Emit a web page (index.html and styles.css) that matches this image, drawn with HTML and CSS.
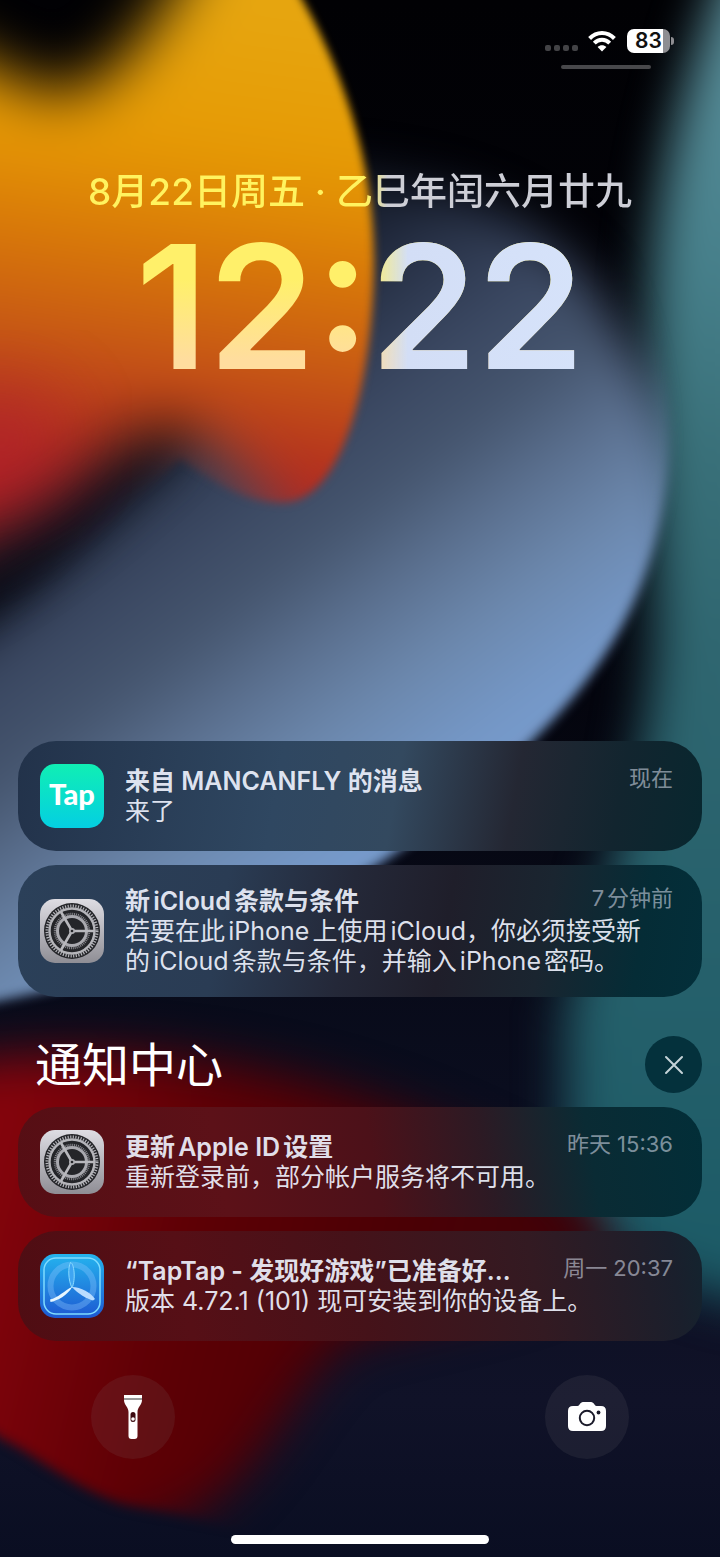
FILE: index.html
```html
<!DOCTYPE html>
<html lang="zh-CN">
<head>
    <meta charset="UTF-8">
    <meta name="viewport" content="width=device-width, initial-scale=1.0">
    <title>锁定屏幕</title>
    <link rel="stylesheet" href="styles.css">
</head>
<body>
    <!-- Wallpaper -->
    <svg class="wallpaper" viewBox="0 0 720 1557" preserveAspectRatio="none" aria-hidden="true" color-interpolation-filters="sRGB">
        <defs>
            <linearGradient id="base" x1="0" y1="0" x2="0" y2="1">
                <stop offset="0" stop-color="#010104"/>
                <stop offset="0.45" stop-color="#04050e"/>
                <stop offset="0.7" stop-color="#0a0d1e"/>
                <stop offset="0.9" stop-color="#101228"/>
                <stop offset="1" stop-color="#0a0e22"/>
            </linearGradient>
            <linearGradient id="teal" gradientUnits="userSpaceOnUse" x1="0" y1="0" x2="0" y2="1300">
                <stop offset="0" stop-color="#5a8f9b"/>
                <stop offset="0.2" stop-color="#47808b"/>
                <stop offset="0.35" stop-color="#397079"/>
                <stop offset="0.5" stop-color="#2f6670"/>
                <stop offset="1" stop-color="#1b5a66"/>
            </linearGradient>
            <linearGradient id="blue" gradientUnits="userSpaceOnUse" x1="240" y1="320" x2="540" y2="720">
                <stop offset="0" stop-color="#1a2132"/>
                <stop offset="0.06" stop-color="#232c40"/>
                <stop offset="0.28" stop-color="#3a4761"/>
                <stop offset="0.45" stop-color="#45556e"/>
                <stop offset="0.6" stop-color="#5a6f8e"/>
                <stop offset="0.77" stop-color="#6c88ad"/>
                <stop offset="0.98" stop-color="#769acb"/>
            </linearGradient>
            <linearGradient id="orange" gradientUnits="userSpaceOnUse" x1="240" y1="0" x2="170" y2="500">
                <stop offset="0" stop-color="#e6a610"/>
                <stop offset="0.3" stop-color="#e69a04"/>
                <stop offset="0.5" stop-color="#d97a08"/>
                <stop offset="0.7" stop-color="#c85a14"/>
                <stop offset="0.88" stop-color="#b5351e"/>
                <stop offset="1" stop-color="#b02222"/>
            </linearGradient>
            <linearGradient id="red" gradientUnits="userSpaceOnUse" x1="0" y1="1150" x2="640" y2="1300">
                <stop offset="0" stop-color="#84040c"/>
                <stop offset="0.3" stop-color="#5e0005"/>
                <stop offset="0.6" stop-color="#4c0005"/>
                <stop offset="1" stop-color="#3c0208"/>
            </linearGradient>
            <filter id="soft6" x="-20%" y="-20%" width="140%" height="140%"><feGaussianBlur stdDeviation="6"/></filter>
            <filter id="soft4" x="-20%" y="-20%" width="140%" height="140%"><feGaussianBlur stdDeviation="4"/></filter>
            <filter id="soft24" x="-30%" y="-30%" width="160%" height="160%"><feGaussianBlur stdDeviation="24"/></filter>
            <filter id="soft30" x="-30%" y="-30%" width="160%" height="160%"><feGaussianBlur stdDeviation="30"/></filter>
            <filter id="soft40" x="-60%" y="-60%" width="220%" height="220%"><feGaussianBlur stdDeviation="40"/></filter>
            <mask id="blueEdge" maskUnits="userSpaceOnUse" x="0" y="0" width="720" height="1557">
                <path filter="url(#soft6)" fill="#fff" d="M-60 100H560C640 190 684 360 668 480C652 600 600 676 528 745C470 795 430 830 376 866C250 940 120 980-60 1012Z"/>
            </mask>
            <mask id="orangeEdge" maskUnits="userSpaceOnUse" x="0" y="0" width="720" height="1557">
                <path filter="url(#soft4)" fill="#fff" d="M-60-60H265C328 30 374 140 374 260C374 370 346 502 282 503C240 503 210 480 180 460L-60 700Z"/>
            </mask>
            <mask id="redEdge" maskUnits="userSpaceOnUse" x="0" y="900" width="720" height="657">
                <path filter="url(#soft6)" fill="#fff" d="M-60 900H780V1557H300C220 1520 170 1514 130 1506C80 1494 30 1450 0 1438L-60 1390Z"/>
            </mask>
        </defs>
        <rect width="720" height="1557" fill="url(#base)"/>
        <path filter="url(#soft24)" fill="url(#teal)" d="M800-60H735C690 60 655 170 650 300C646 420 655 520 655 640C645 780 600 900 566 1010V1200C600 1250 680 1300 800 1310Z"/>
        <g mask="url(#blueEdge)">
            <path filter="url(#soft24)" fill="url(#blue)" d="M-80 660C60 600 100 480 200 420L320 170C440 180 560 210 620 330C720 480 700 640 620 800L560 1060L-80 1100Z"/>
            <path filter="url(#soft24)" fill="#10131f" opacity=".95" d="M-100 480L150 400L180 450C120 500 60 570-100 640Z"/>
        </g>
        <g mask="url(#orangeEdge)">
            <path filter="url(#soft30)" fill="url(#orange)" d="M-100 20C0 70 30 92 60 92C105 92 160 30 225-100H500V600L340 570C260 525 230 430 165 430C110 430 70 510-80 560Z"/>
            <ellipse filter="url(#soft40)" cx="0" cy="440" rx="60" ry="50" fill="#b01c30" opacity=".6"/>
        </g>
        <g mask="url(#redEdge)">
            <path filter="url(#soft24)" fill="url(#red)" d="M-80 1070C60 1040 240 1050 400 1110C500 1150 580 1190 610 1230C600 1290 460 1310 350 1340C290 1380 270 1480 180 1520L-80 1600Z"/>
        </g>
    </svg>

    <div class="screen">
        <header class="status">
            <div class="status-icons">
                <div class="signal"><i></i><i></i><i></i><i></i></div>
                <svg class="wifi" viewBox="0 0 28 22" aria-label="Wi-Fi">
                    <path fill="none" stroke="#fff" stroke-width="4" d="M1.600 8.500C8.600 1.200 19.400 1.200 26.400 8.500M6.300 13.200C10.700 8.700 17.300 8.700 21.700 13.200"/>
                    <path fill="#fff" d="M14 21.500L9.600 17C12.100 14.600 15.900 14.600 18.400 17Z"/>
                </svg>
                <div class="battery"><span>83</span></div>
            </div>
            <div class="status-bar"></div>
        </header>

        <section class="clock">
            <div class="date">8月22日周五 · 乙巳年闰六月廿九</div>
            <div class="time">12:22</div>
        </section>

        <main class="notifications">
            <article class="card card-message">
                <div class="app-icon tap">Tap</div>
                <div class="card-body">
                    <div class="card-head">
                        <h2>来自 MANCANFLY 的消息</h2>
                        <time>现在</time>
                    </div>
                    <p>来了</p>
                </div>
            </article>

            <article class="card card-icloud">
                <svg class="app-icon" viewBox="0 0 64 64" aria-hidden="true">
                    <defs>
                        <linearGradient id="silver" x1="0" y1="0" x2="0" y2="1">
                            <stop offset="0" stop-color="#dedde3"/>
                            <stop offset="1" stop-color="#8f8e95"/>
                        </linearGradient>
                        <g id="gear">
                            <rect width="64" height="64" rx="15" fill="url(#silver)"/>
                            <circle cx="32" cy="32" r="28" fill="#242529"/>
                            <circle cx="32" cy="32" r="25" fill="none" stroke="#b4b4ba" stroke-width="3" stroke-dasharray="1.200 1.418"/>
                            <circle cx="32" cy="32" r="22.500" fill="none" stroke="#b5b5ba" stroke-width="2.400"/>
                            <circle cx="32" cy="32" r="17" fill="none" stroke="#85858b" stroke-width="2.500" stroke-dasharray="1 .9"/>
                            <circle cx="32" cy="32" r="14.500" fill="none" stroke="#a9a9af" stroke-width="3"/>
                            <path stroke="#b8b8bd" stroke-width="2.600" d="M32 32H54M32 32L21 13M32 32L21 51"/>
                            <circle cx="32" cy="32" r="3" fill="#b0b0b5"/>
                            <circle cx="32" cy="32" r="1.300" fill="#242529"/>
                        </g>
                    </defs>
                    <use href="#gear"/>
                </svg>
                <div class="card-body">
                    <div class="card-head">
                        <h2>新iCloud条款与条件</h2>
                        <time>7分钟前</time>
                    </div>
                    <p>若要在此iPhone上使用iCloud，你必须接受新的iCloud条款与条件，并输入iPhone密码。</p>
                </div>
            </article>

            <div class="center-head">
                <h1>通知中心</h1>
                <button class="clear" aria-label="清除">
                    <svg viewBox="0 0 20 20"><path d="M2 2L18 18M18 2L2 18"/></svg>
                </button>
            </div>

            <article class="card card-account">
                <svg class="app-icon" viewBox="0 0 64 64" aria-hidden="true"><use href="#gear"/></svg>
                <div class="card-body">
                    <div class="card-head">
                        <h2>更新Apple ID设置</h2>
                        <time>昨天 15:36</time>
                    </div>
                    <p>重新登录前，部分帐户服务将不可用。</p>
                </div>
            </article>

            <article class="card card-testflight">
                <svg class="app-icon" viewBox="0 0 64 64" aria-hidden="true">
                    <defs>
                        <linearGradient id="sky" x1="0" y1="0" x2="0" y2="1">
                            <stop offset="0" stop-color="#25b4ee"/>
                            <stop offset="1" stop-color="#1d58d2"/>
                        </linearGradient>
                    </defs>
                    <rect width="64" height="64" rx="15" fill="url(#sky)"/>
                    <rect x="4" y="4" width="56" height="56" rx="12" fill="none" stroke="#7fdcff" stroke-width="1.500"/>
                    <circle cx="32" cy="32" r="21.500" fill="none" stroke="#8fc8ff" stroke-opacity=".35" stroke-width="6"/>
                    <path fill="#3fa5f2" stroke="#8bdcff" stroke-width="1" d="M32 34C28 26 28 13 30.500 8.500C34 9 36 25 32 34Z"/>
                    <path fill="#e8f7ff" d="M32 33C28 41 17 47 10.500 48L10 45.500C18 44 25 36 32 33Z"/>
                    <path fill="#b9dcff" d="M32 33C41 33 51 39 55 45L53 46.500C47 45 37 39 32 33Z"/>
                </svg>
                <div class="card-body">
                    <div class="card-head">
                        <h2>“TapTap - 发现好游戏”已准备好…</h2>
                        <time>周一 20:37</time>
                    </div>
                    <p>版本 4.72.1 (101) 现可安装到你的设备上。</p>
                </div>
            </article>
        </main>

        <footer class="shortcuts">
            <button class="shortcut" aria-label="手电筒">
                <svg width="20" height="46" viewBox="0 0 20 46">
                    <path fill="#fff" d="M1 1H19V4H1ZM1 6H19C19 11 14.500 13 14.500 18V42Q14.500 45 11.500 45H8.500Q5.500 45 5.500 42V18C5.500 13 1 11 1 6Z"/>
                    <path fill="#999" d="M1 4H19V6H1Z"/>
                    <rect x="7.500" y="18" width="5" height="10" rx="2.500" fill="#3c0a10"/>
                    <circle cx="10" cy="25" r="1.800" fill="#fff"/>
                </svg>
            </button>
            <button class="shortcut" aria-label="相机">
                <svg width="40" height="32" viewBox="0 0 40 32">
                    <path fill="#fff" d="M6 5H10.500C12.500 5 13 1 16 1H24C27 1 27.500 5 29.500 5H34Q39 5 39 10V25Q39 30 34 30H6Q1 30 1 25V10Q1 5 6 5Z"/>
                    <circle cx="20" cy="17" r="7.200" fill="none" stroke="#1a1a2a" stroke-width="2"/>
                    <circle cx="31.500" cy="11.500" r="1.900" fill="#1a1a2a"/>
                </svg>
            </button>
        </footer>
        <div class="home-bar"></div>
    </div>
</body>
</html>
```
FILE: styles.css
```css
:root {
    --text: rgba(240, 244, 255, 0.92);
    --muted: rgba(225, 230, 245, 0.55);
}

* {
    margin: 0;
    padding: 0;
    box-sizing: border-box;
}

body {
    font-family: Inter, "Noto Sans CJK SC", sans-serif;
    background-color: #04050e;
    color: var(--text);
}

button {
    border: none;
    cursor: pointer;
    display: flex;
    align-items: center;
    justify-content: center;
}

.wallpaper {
    position: absolute;
    top: 0;
    left: 0;
    width: 100%;
    height: 100%;
}

.screen {
    position: relative;
    display: flex;
    flex-direction: column;
    min-height: 100vh;
    padding: 28px 18px 13px;
}

/* Status bar */
.status {
    display: flex;
    flex-direction: column;
    align-items: flex-end;
    padding-right: 32px;
}

.status-icons {
    display: flex;
    align-items: center;
    height: 25px;
}

.signal {
    display: flex;
    gap: 3px;
    padding-top: 14px;
    margin-right: 10px;
}

.signal i {
    width: 6px;
    height: 6px;
    border-radius: 2px;
    background-color: #434346;
}

.wifi {
    width: 28px;
    height: 22px;
    margin-right: 11px;
}

.battery {
    position: relative;
    width: 43px;
    height: 24px;
    border-radius: 7px;
    background: linear-gradient(to right, #fff 83%, #8e8e92 83%);
    color: #111;
    font-size: 21px;
    font-weight: 600;
    line-height: 24px;
    text-align: center;
}

.battery::after {
    content: "";
    position: absolute;
    right: -4px;
    top: 8px;
    width: 3px;
    height: 8px;
    border-radius: 0 3px 3px 0;
    background-color: #8e8e92;
}

.status-bar {
    width: 90px;
    height: 4px;
    margin: 12px 19px 0 0;
    border-radius: 2px;
    background-color: #48484b;
}

/* Date and time */
.clock {
    text-align: center;
    margin-top: 98px;
}

.date,
.time {
    -webkit-background-clip: text;
    background-clip: text;
    color: transparent;
}

.date {
    font-size: 37px;
    font-weight: 500;
    line-height: 50px;
    background-image: linear-gradient(to right, #fff35f 51%, #cdced6 54%);
}

.time {
    font-size: 172px;
    font-weight: 600;
    line-height: 178px;
    background-image:
        linear-gradient(to right, rgba(211, 222, 246, 0) 51%, #d3def6 57%, #d8e6fd),
        linear-gradient(#fff06a 35%, #ffdd9e 80%);
}

/* Notifications */
.notifications {
    display: flex;
    flex-direction: column;
    gap: 14px;
    margin-top: auto;
}

.card {
    display: flex;
    align-items: center;
    gap: 21px;
    min-height: 110px;
    padding: 21px 29px 21px 22px;
    border-radius: 38px;
}

.card-message {
    background: linear-gradient(100deg, #22324a, #2f4761 38%, #33495f 55%, #242733 72%, #12252f 87%, #08272f);
}

.card-icloud {
    background: linear-gradient(100deg, #2b4059, #2a3c54 30%, #242838 48%, #1f1e2a 62%, #1a2530 76%, #052c36 90%, #032f3a);
}

.card-account {
    background: linear-gradient(80deg, #560e14, #5c1118 30%, #4c1119 52%, #2c1a24 68%, #0a2b34 83%, #022e38);
}

.card-testflight {
    background: linear-gradient(80deg, #4f0d13, #560f16 25%, #451219 50%, #331a22 75%, #1a1f2c 95%, #13242f);
}

.app-icon {
    flex: none;
    width: 64px;
    height: 64px;
}

.tap {
    border-radius: 15px;
    background: linear-gradient(#10efb4, #04cfe2);
    color: #fff;
    font-family: Lato, sans-serif;
    font-size: 29px;
    font-weight: 900;
    line-height: 60px;
    text-align: center;
}

.card-body {
    flex: 1;
    min-width: 0;
    font-size: 25px;
    line-height: 30px;
    text-autospace: normal;
}

.card-body p {
    padding-right: 12px;
}

.card-head {
    display: flex;
    justify-content: space-between;
    gap: 20px;
}

.card h2 {
    font-size: 25px;
    font-weight: 600;
    overflow: hidden;
    text-overflow: ellipsis;
    white-space: nowrap;
}

.card time {
    flex: none;
    color: var(--muted);
    font-size: 22px;
    line-height: 24px;
}

.center-head {
    display: flex;
    align-items: center;
    justify-content: space-between;
    margin-top: 25px;
    padding-left: 17px;
}

.center-head h1 {
    font-size: 47px;
    font-weight: 400;
    line-height: 57px;
    color: #fff;
}

.clear {
    width: 57px;
    height: 57px;
    border-radius: 50%;
    background-color: #04313c;
}

.clear svg {
    width: 20px;
    height: 20px;
    fill: none;
    stroke: #c5d3d8;
    stroke-width: 2;
    stroke-linecap: round;
}

/* Bottom shortcuts */
.shortcuts {
    display: flex;
    justify-content: space-between;
    padding: 34px 73px 0;
}

.shortcut {
    width: 84px;
    height: 84px;
    border-radius: 50%;
    background-color: rgba(130, 130, 130, 0.12);
}

.home-bar {
    width: 258px;
    height: 9px;
    margin: 76px auto 0;
    border-radius: 5px;
    background-color: #fff;
}
```
